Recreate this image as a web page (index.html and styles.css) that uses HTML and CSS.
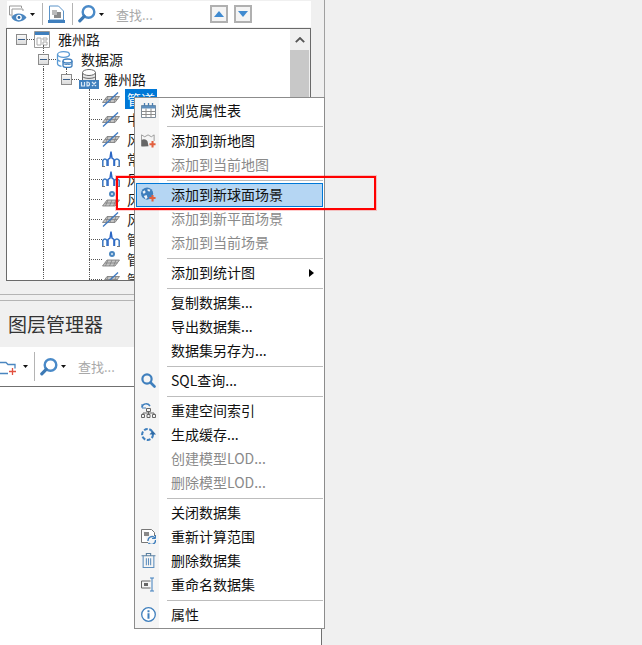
FILE: index.html
```html
<!DOCTYPE html>
<html lang="zh">
<head>
<meta charset="utf-8">
<title>雅州路</title>
<link rel="stylesheet" href="styles.css">
</head>
<body>
<svg class="defs" width="0" height="0" aria-hidden="true">
  <defs>
    <symbol id="caret" viewBox="0 0 5 3"><path d="M0 0h5L2.500 3z" fill="#111"/></symbol>
    <symbol id="search" viewBox="0 0 18 18"><circle cx="10.500" cy="7" r="5.800" fill="#fff" stroke="#4a8ac8" stroke-width="2.400"/><path d="M6.200 11.300L1.800 15.800" stroke="#3d7ab5" stroke-width="3.200" stroke-linecap="round"/></symbol>
    <symbol id="search2" viewBox="0 0 15 15"><circle cx="6" cy="6" r="4.600" fill="none" stroke="#3f7fbd" stroke-width="2.200"/><path d="M9.500 9.500L13.500 13.500" stroke="#3f7fbd" stroke-width="2.600" stroke-linecap="round"/></symbol>
    <symbol id="eye" viewBox="0 0 18 18"><path d="M.5 1h12v2M.5 1v9h2" fill="none" stroke="#999"/><path d="M3 4h11v2M3 4v8" fill="none" stroke="#999"/><path d="M2.500 12.500C5 7 14 7 17.500 12.500 14 18 5 18 2.500 12.500z" fill="#4a86c0"/><circle cx="10" cy="12.500" r="2.800" fill="#fff"/><circle cx="10" cy="12.500" r="1.400" fill="#2f6aa5"/></symbol>
    <symbol id="doc" viewBox="0 0 19 19"><path d="M2.500 1h9l5 5v9h-14z" fill="#fff" stroke="#5b93c8"/><path d="M7 7h7v6H7z" fill="#8a8a8a"/><path d="M5 5h5v5H5z" fill="#bbb"/><path d="M1 15h17v3H1z" fill="#3f7fbd"/></symbol>
    <symbol id="root" viewBox="0 0 16 17"><path d="M.5.500h15v16H.5z" fill="#fff" stroke="#999"/><path d="M1 1h14v3H1z" fill="#3f7fbd"/><path d="M3 7h4v7H3zM9 7h4v2H9zM9 11h4v3H9z" fill="none" stroke="#aaa"/></symbol>
    <symbol id="source" viewBox="0 0 17 17"><ellipse cx="7.500" cy="3.500" rx="6" ry="2.800" fill="#fff" stroke="#5b9bd5" stroke-width="1.300"/><path d="M1.500 3.500v9c0 1.500 2 2.500 4 2.800M1.500 8c0 1.200 1.500 2 3 2.400" fill="none" stroke="#5b9bd5" stroke-width="1.300"/><path d="M7 10v4.500c0 1 2 2 4.500 2s4.500-1 4.500-2V10" fill="#fff" stroke="#3f7fbd" stroke-width="1.300"/><ellipse cx="11.500" cy="10" rx="4.500" ry="2" fill="#fff" stroke="#3f7fbd" stroke-width="1.300"/><path d="M7 12.500c1 1.300 8 1.300 9 0" fill="none" stroke="#3f7fbd"/></symbol>
    <symbol id="udx" viewBox="0 0 20 20"><path d="M3.500 3.500v9h13v-9" fill="#e8e8e8" stroke="#666"/><ellipse cx="10" cy="3.500" rx="6.500" ry="3" fill="#fff" stroke="#666"/><path d="M3.500 7.500c1.500 2.500 11.500 2.500 13 0" fill="none" stroke="#666"/><path d="M0 11h20v9H0z" fill="#3f7fbd"/><path d="M2.500 13v4h3v-4M8 13v4c3.400 0 3.400-4 0-4zM13 13l4 4M17 13l-4 4" fill="none" stroke="#dbe8f5" stroke-width="1.200"/></symbol>
    <symbol id="line" viewBox="0 0 18 16"><path d="M.5 11.500L5 5.500h12.500L13 11.500z" fill="#c4c4c4" stroke="#777" stroke-width=".8"/><path d="M3 8.500h12.500M6 5.500l-2 6M10 5.500l-2 6M14 5.500l-2 6" stroke="#808080" stroke-width=".8"/><path d="M1 15.500L16 1.500" stroke="#3c78c0" stroke-width="1.300"/></symbol>
    <symbol id="spire" viewBox="0 0 18 16"><path d="M.8 15V9.500Q3 6.500 5 9.500V15M12.500 15V9.500Q15 6.500 17.200 9.500V15" fill="none" stroke="#3c78c0" stroke-width="1.500"/><path d="M6 15V8.500L8 7 9 .5 10 7 12 8.500V15" fill="none" stroke="#2a66c5" stroke-width="1.500"/><path d="M0 15.500h3M15 15.500h3" stroke="#777"/></symbol>
    <symbol id="point" viewBox="0 0 18 16"><circle cx="10" cy="3" r="3" fill="#4a86c0"/><circle cx="10" cy="3" r="1" fill="#dbe8f5"/><path d="M.5 15L5 9h12.500L13 15z" fill="#c4c4c4" stroke="#777" stroke-width=".8"/><path d="M3 12h12.500M6 9l-2.500 6M10 9l-2.500 6M14 9l-2.500 6" stroke="#808080" stroke-width=".8"/></symbol>
    <symbol id="table" viewBox="0 0 15 15"><path d="M.5 2.500h14v12H.5z" fill="#fff" stroke="#7d8b99"/><path d="M.5 2.500h14v3H.5z" fill="#5f8fbd"/><path d="M3.500 0v3M7.500 0v3M11.500 0v3" stroke="#4a7eb0" stroke-width="1.300"/><path d="M.5 8.500h14M.5 11.500h14M5 5.500v9M10 5.500v9" stroke="#8c8c8c"/></symbol>
    <symbol id="addmap" viewBox="0 0 16 15"><path d="M.5 1.500L4 3.500 7.500 1.500 11 3.500 14 1.500V8M.5 1.500v12" fill="none" stroke="#999"/><path d="M.5 7c3-2 6 0 6.500 1.500L8 13.500 3 14H.5z" fill="#666"/><path d="M9 11.500h6.500M12.300 8v7" stroke="#e2603f" stroke-width="2.200"/></symbol>
    <symbol id="globe" viewBox="0 0 16 15"><circle cx="6.500" cy="6.500" r="6.500" fill="#3f7fbd"/><path d="M1.500 4.500L4 3l1 2-2 2zM7 1.500l3 1-1 2-2-1zM3 9l3-1 1 3-2 1.500z" fill="#eef3f8"/><path d="M9 11.300h6.500M12.300 8v7" stroke="#e2603f" stroke-width="2.200"/></symbol>
    <symbol id="tree" viewBox="0 0 15 15"><path d="M1 4C2 0 7 0 9 3" fill="none" stroke="#3f7fbd" stroke-width="1.500"/><path d="M1 1v4h4" fill="none" stroke="#3f7fbd"/><path d="M5.500 5.500h4v3h-4zM.5 11.500h3v3h-3zM6 11.500h3v3H6zM11.500 11.500h3v3h-3zM7.500 8.500v3M2 11.500v-1.500h11v1.500" fill="none" stroke="#666"/></symbol>
    <symbol id="cache" viewBox="0 0 16 14"><circle cx="7" cy="7" r="5.800" fill="none" stroke="#3f7fbd" stroke-width="2.200" stroke-dasharray="4 1.700"/><path d="M9 7h7l-3.500-4z" fill="#2f6aa5"/></symbol>
    <symbol id="recalc" viewBox="0 0 15 15"><path d="M.5.500h10l3 3V7M.5.500v13H7" fill="#fff" stroke="#777"/><path d="M3 3h5v4H3z" fill="#888"/><path d="M7 12a4 4 0 0 1 7-3M14.500 11a4 4 0 0 1-7 3" fill="none" stroke="#3f7fbd" stroke-width="1.400"/><path d="M14.500 6v3.500H11" fill="none" stroke="#3f7fbd"/></symbol>
    <symbol id="trash" viewBox="0 0 13 14"><path d="M0 2.500h13M4.500 2.500V.5h4v2" fill="none" stroke="#5a7f9f"/><path d="M1.500 2.500v11h10v-11M4.500 5v6.500M6.500 5v6.500M8.500 5v6.500" fill="none" stroke="#5f8fbd"/></symbol>
    <symbol id="rename" viewBox="0 0 15 14"><path d="M.5 3.500h9M.5 10.500h9M.5 3.500v7" fill="none" stroke="#666"/><path d="M3 5.500h4v3H3z" fill="#666"/><path d="M9 .5h4M9 13.500h4M11 .5v13" fill="none" stroke="#3f7fbd"/></symbol>
    <symbol id="info" viewBox="0 0 15 15"><circle cx="7.500" cy="7.500" r="6.800" fill="#fff" stroke="#3f7fbd" stroke-width="1.300"/><path d="M6.500 3.200h2v2h-2zM6.500 6.200h2v5.500h-2z" fill="#3f7fbd"/></symbol>
  </defs>
</svg>

<div class="pane">
  <section class="upper">
    <div class="toolbar">
      <svg class="ic18"><use href="#eye"/></svg>
      <svg class="caret"><use href="#caret"/></svg>
      <span class="tsep"></span>
      <svg class="ic19"><use href="#doc"/></svg>
      <span class="tsep"></span>
      <svg class="ic18"><use href="#search"/></svg>
      <svg class="caret"><use href="#caret"/></svg>
      <span class="find">查找...</span>
      <span class="stepper">
        <button class="step"><span class="tri up"></span></button>
        <button class="step"><span class="tri down"></span></button>
      </span>
    </div>

    <div class="treebox">
      <div class="tree">
        <div class="row r1"><span class="box"></span><span class="dash d1"></span><svg class="node n-root"><use href="#root"/></svg><span class="label">雅州路</span></div>
        <div class="row r2"><span class="guide g-first"></span><span class="box onguide"></span><span class="dash d1"></span><svg class="node n-source"><use href="#source"/></svg><span class="label">数据源</span></div>
        <div class="row r3"><span class="guide g1"></span><span class="box box3"></span><span class="dash d1"></span><svg class="node n-udx"><use href="#udx"/></svg><span class="label l3">雅州路</span></div>
        <div class="row r4"><span class="guide g1"></span><span class="guide g2"></span><span class="dash d2"></span><svg class="node leaf"><use href="#line"/></svg><span class="label leaftext selected">管道</span></div>
        <div class="row r4"><span class="guide g1"></span><span class="guide g2"></span><span class="dash d2"></span><svg class="node leaf"><use href="#line"/></svg><span class="label leaftext">中线</span></div>
        <div class="row r4"><span class="guide g1"></span><span class="guide g2"></span><span class="dash d2"></span><svg class="node leaf"><use href="#line"/></svg><span class="label leaftext">风井</span></div>
        <div class="row r4"><span class="guide g1"></span><span class="guide g2"></span><span class="dash d2"></span><svg class="node leaf"><use href="#spire"/></svg><span class="label leaftext">常规</span></div>
        <div class="row r4"><span class="guide g1"></span><span class="guide g2"></span><span class="dash d2"></span><svg class="node leaf"><use href="#spire"/></svg><span class="label leaftext">风机</span></div>
        <div class="row r4"><span class="guide g1"></span><span class="guide g2"></span><span class="dash d2"></span><svg class="node leaf"><use href="#point"/></svg><span class="label leaftext">风阀</span></div>
        <div class="row r4"><span class="guide g1"></span><span class="guide g2"></span><span class="dash d2"></span><svg class="node leaf"><use href="#line"/></svg><span class="label leaftext">风管</span></div>
        <div class="row r4"><span class="guide g1"></span><span class="guide g2"></span><span class="dash d2"></span><svg class="node leaf"><use href="#spire"/></svg><span class="label leaftext">管件</span></div>
        <div class="row r4"><span class="guide g1"></span><span class="guide g2"></span><span class="dash d2"></span><svg class="node leaf"><use href="#point"/></svg><span class="label leaftext">管点</span></div>
        <div class="row r4"><span class="guide g1"></span><span class="guide g2"></span><span class="dash d2"></span><svg class="node leaf"><use href="#line"/></svg><span class="label leaftext">管线</span></div>
      </div>
      <div class="scrollbar">
        <div class="sb-up"><svg class="chev" viewBox="0 0 10 6"><path d="M.8 5.200L5 1l4.200 4.200" fill="none" stroke="#555" stroke-width="1.800"/></svg></div>
        <div class="sb-thumb"></div>
      </div>
    </div>

    <div class="split"></div>
    <h2 class="title">图层管理器</h2>
    <div class="toolbar2">
      <svg class="folder" viewBox="0 0 17 16"><path d="M-1 3.500h7l2 2h7v4M-1 3.500v11h9" fill="none" stroke="#4a86c0" stroke-width="1.300"/><path d="M9 12.500h7M12.500 9v7" stroke="#e2503f" stroke-width="1.300"/></svg>
      <svg class="caret"><use href="#caret"/></svg>
      <span class="tsep tall"></span>
      <svg class="ic18"><use href="#search"/></svg>
      <svg class="caret"><use href="#caret"/></svg>
      <span class="find">查找...</span>
    </div>
  </section>
  <section class="lower"></section>
</div>

<div class="menu">
  <div class="item"><svg class="mi"><use href="#table"/></svg>浏览属性表</div>
  <div class="sep"></div>
  <div class="item"><svg class="mi"><use href="#addmap"/></svg>添加到新地图</div>
  <div class="item off">添加到当前地图</div>
  <div class="sep"></div>
  <div class="item active"><svg class="mi"><use href="#globe"/></svg>添加到新球面场景</div>
  <div class="item off">添加到新平面场景</div>
  <div class="item off">添加到当前场景</div>
  <div class="sep"></div>
  <div class="item">添加到统计图<span class="more"></span></div>
  <div class="sep"></div>
  <div class="item">复制数据集...</div>
  <div class="item">导出数据集...</div>
  <div class="item">数据集另存为...</div>
  <div class="sep"></div>
  <div class="item"><svg class="mi"><use href="#search2"/></svg>SQL查询...</div>
  <div class="sep"></div>
  <div class="item"><svg class="mi"><use href="#tree"/></svg>重建空间索引</div>
  <div class="item"><svg class="mi"><use href="#cache"/></svg>生成缓存...</div>
  <div class="item off">创建模型LOD...</div>
  <div class="item off">删除模型LOD...</div>
  <div class="sep"></div>
  <div class="item">关闭数据集</div>
  <div class="item"><svg class="mi"><use href="#recalc"/></svg>重新计算范围</div>
  <div class="item"><svg class="mi"><use href="#trash"/></svg>删除数据集</div>
  <div class="item"><svg class="mi"><use href="#rename"/></svg>重命名数据集</div>
  <div class="sep"></div>
  <div class="item"><svg class="mi"><use href="#info"/></svg>属性</div>
</div>

<div class="callout"></div>
</body>
</html>
```

FILE: styles.css
```css
* { box-sizing: border-box; }
html, body { margin: 0; height: 100%; }
body {
  position: relative;
  height: 645px;
  overflow: hidden;
  background: #f0f0f0;
  font-family: "Noto Sans CJK SC", "Noto Sans", sans-serif;
  font-size: 14px;
  color: #1a1a1a;
}
.defs { position: absolute; }
svg { display: block; flex: none; }

.pane { display: flex; flex-direction: column; height: 645px; }
.upper {
  width: 325px;
  height: 387px;
  padding-top: 1px;
  border-right: 1px solid #a0a0a0;
  flex: none;
}
.lower {
  width: 322px;
  flex: 1;
  background: #fff;
  border-right: 1px solid #707070;
}

.toolbar {
  display: flex;
  align-items: center;
  width: 304px;
  height: 26px;
  margin-left: 7px;
  padding-left: 2px;
  background: #fff;
}
.ic18 { width: 18px; height: 18px; }
.ic19 { width: 19px; height: 19px; }
.caret { width: 5px; height: 3px; margin-left: 3px; }
.tsep { width: 1px; height: 22px; margin: 0 5px 0 6px; background: #b4b4b4; }
.toolbar .caret + .tsep { margin: 0 4px 0 7px; }
.find { margin-left: 12px; font-size: 13px; color: #a8a8a8; }
.stepper { display: flex; gap: 6px; margin-left: 57px; }
.step {
  display: flex;
  align-items: center;
  justify-content: center;
  width: 18px;
  height: 18px;
  padding: 0;
  border: 2px solid #b0b0b0;
  background: #f4f4f4;
}
.tri { width: 0; height: 0; border-left: 5px solid transparent; border-right: 5px solid transparent; }
.tri.up { border-bottom: 6px solid #3f8ad0; }
.tri.down { border-top: 6px solid #3f8ad0; }

.treebox {
  display: flex;
  width: 305px;
  height: 253px;
  margin: 1px 0 0 6px;
  border: 1px solid #6a6a6a;
  background: #fff;
}
.tree { flex: 1; overflow: hidden; }
.row { position: relative; display: flex; align-items: center; height: 20px; }
.r1 { padding-left: 9px; }
.r2 { padding-left: 31px; }
.r3 { padding-left: 54px; }
.r4 { padding-left: 82px; }
.box {
  width: 11px;
  height: 11px;
  flex: none;
  border: 1px solid #8c8c8c;
  background: linear-gradient(#f8f8f8, #dcdcdc);
  position: relative;
}
.box::after {
  content: "";
  position: absolute;
  left: 1px;
  right: 1px;
  top: 4px;
  height: 1px;
  background: #3a5f8a;
}
.dash { height: 0; border-top: 1px dotted #555; flex: none; }
.d1 { width: 7px; }
.d2 { width: 13px; }
.guide { position: absolute; top: 0; bottom: 0; width: 0; border-left: 1px dotted #555; }
.g1 { left: 36px; }
.g2 { left: 82px; }
.g-first { left: 36px; top: -4px; bottom: 0; }
.r3 .box::before {
  content: "";
  position: absolute;
  left: 4px;
  top: -7px;
  height: 6px;
  border-left: 1px dotted #555;
}
.node { width: 17px; height: 17px; }
.n-root { width: 16px; }
.n-udx { width: 20px; height: 20px; }
.leaf { width: 18px; height: 16px; }
.label { margin-left: 8px; line-height: 20px; white-space: nowrap; }
.l3 { margin-left: 5px; }
.leaftext { margin-left: 5px; padding: 0 2px; width: 32px; }
.selected { background: #0078d7; color: #fff; }

.scrollbar { width: 20px; display: flex; flex-direction: column; background: #f0f0f0; }
.sb-up { display: flex; align-items: center; justify-content: center; height: 21px; }
.chev { width: 10px; height: 6px; }
.sb-thumb { flex: 1; background: #c8c8c8; margin-right: 1px; }

.split {
  height: 7px;
  margin-top: 13px;
  border-top: 1px solid #b4b4b4;
  border-bottom: 1px solid #b4b4b4;
}
.title {
  height: 46px;
  margin: 0;
  padding-left: 8px;
  font-size: 19px;
  font-weight: 400;
  line-height: 45px;
  color: #333;
}
.toolbar2 {
  display: flex;
  align-items: center;
  height: 40px;
  background: #fff;
  border-bottom: 1px solid #707070;
}
.folder { width: 17px; height: 16px; }
.toolbar2 .folder + .caret { margin-left: 6px; }
.tsep.tall { height: 29px; margin: 0 5px 0 6px; }
.toolbar2 .find { margin-left: 12px; }

.menu {
  position: absolute;
  left: 134px;
  top: 97px;
  width: 191px;
  padding: 1px;
  border: 1px solid #8c8c8c;
  background: linear-gradient(90deg, #f5f5f5 0, #f5f5f5 24px, #fff 24px);
  font-size: 14px;
  color: #111;
}
.item {
  position: relative;
  height: 24px;
  padding-left: 35px;
  line-height: 22px;
  white-space: nowrap;
}
.off { color: #8a8a8a; }
.active {
  background: #b5d6f3;
  border: 1px solid #0078d7;
  padding-left: 34px;
  line-height: 20px;
}
.sep { height: 6px; margin-left: 31px; padding-top: 3px; }
.sep::before { content: ""; display: block; height: 1px; background: #bdbdbd; }
.mi {
  position: absolute;
  left: 5px;
  top: 4px;
  width: 15px;
  height: 15px;
}
.active .mi { left: 4px; top: 3px; }
.more {
  position: absolute;
  right: 9px;
  top: 8px;
  width: 0;
  height: 0;
  border-top: 4px solid transparent;
  border-bottom: 4px solid transparent;
  border-left: 5px solid #000;
}

.callout {
  position: absolute;
  left: 116px;
  top: 176px;
  width: 260px;
  height: 34px;
  border: 2px solid #f00;
  box-shadow: 0 0 0 1px rgba(255, 0, 0, .2);
}
```
